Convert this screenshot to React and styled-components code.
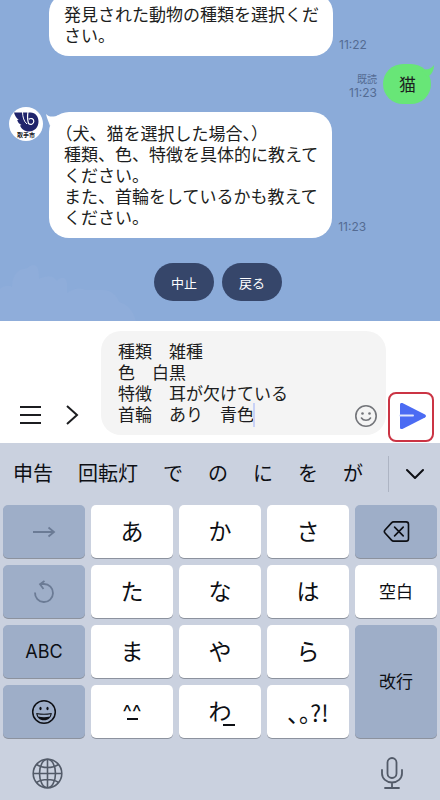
import React, { useState } from "react";
import styled, { createGlobalStyle } from "styled-components";

const GlobalStyle = createGlobalStyle`
  * {
    box-sizing: border-box;
  }
  body {
    margin: 0;
    font-family: Inter, "Noto Sans CJK JP", sans-serif;
    color: #1c1d20;
  }
  button {
    padding: 0;
    border: none;
    background: none;
    font-family: inherit;
    color: inherit;
    cursor: pointer;
  }
`;

const Screen = styled.div`
  display: flex;
  flex-direction: column;
  height: 100vh;
  overflow: hidden;
`;

/* ---------- chat ---------- */

const Chat = styled.main`
  position: relative;
  flex: 1;
  min-height: 0;
  display: flex;
  flex-direction: column;
  justify-content: flex-end;
  padding: 0 9px 20px;
  overflow: hidden;
  background: #8babd9;
`;

const Clouds = styled.svg`
  position: absolute;
  left: 0;
  bottom: 0;
`;

const Row = styled.div`
  display: flex;
  align-items: flex-end;
  justify-content: ${(props) => (props.$mine ? "flex-end" : "flex-start")};
  gap: 6px;
  margin-bottom: ${(props) => props.$space || 0}px;
`;

const AvatarSlot = styled.div`
  flex: none;
  align-self: flex-start;
  width: 34px;
`;

const Avatar = styled.div`
  display: flex;
  flex-direction: column;
  align-items: center;
  width: 34px;
  height: 34px;
  padding-top: 5px;
  border-radius: 50%;
  background: #fff;
  color: #15161c;
  font-size: 6px;
  font-weight: 700;
  line-height: 6px;
`;

const Bubble = styled.div`
  position: relative;
  padding: ${(props) => (props.$mine ? "9px 15px 10px 16px" : "10px 14px 11px 15px")};
  margin-top: ${(props) => (props.$tail ? 5 : 0)}px;
  border-radius: 20px;
  background: ${(props) => (props.$mine ? "#68e677" : "#fff")};
  font-family: "Noto Sans CJK JP", sans-serif;
  font-size: 17px;
  line-height: 21px;
  white-space: pre-line;
  text-spacing-trim: trim-start;
`;

const Tail = styled.svg`
  position: absolute;
  top: 1px;
  ${(props) => (props.$mine ? "right: -3px;" : "left: -3px;")}
`;

const Meta = styled.div`
  padding-bottom: 4px;
  font-size: 12px;
  line-height: 14px;
  text-align: right;
  color: #546b93;
`;

const Read = styled.div`
  font-size: 10px;
  line-height: 13px;
`;

const QuickReplies = styled.div`
  display: flex;
  justify-content: center;
  gap: 8px;
  padding-right: 4px;
`;

const QuickReply = styled.button`
  width: 60px;
  height: 38px;
  border-radius: 19px;
  background: #36466a;
  color: #fff;
  font-size: 13px;
`;

/* ---------- composer ---------- */

const Composer = styled.form`
  display: flex;
  align-items: flex-end;
  padding: 10px 6px 1px 18px;
  background: #fff;
`;

const IconButton = styled.button`
  display: flex;
  align-items: center;
  justify-content: center;
  width: 24px;
  height: 24px;
  margin: 0 ${(props) => props.$gap || 0}px ${(props) => props.$bottom || 0}px 0;
`;

const InputBox = styled.div`
  position: relative;
  flex: 1;
  display: flex;
  align-items: flex-end;
  margin: 0 2px 7px 0;
  padding: 9px 8px 7px 17px;
  border-radius: 20px;
  background: #f4f4f4;
`;

const MessageInput = styled.textarea`
  flex: 1;
  min-width: 0;
  display: block;
  margin-bottom: 4px;
  padding: 0;
  border: none;
  outline: none;
  resize: none;
  overflow: hidden;
  background: transparent;
  color: #1c1d20;
  font-family: "Noto Sans CJK JP", sans-serif;
  font-size: 17px;
  line-height: 21px;
`;

const Caret = styled.span`
  position: absolute;
  left: 152px;
  bottom: 8px;
  width: 2px;
  height: 24px;
  background: #c9d2f7;
`;

const SendButton = styled.button`
  display: flex;
  align-items: center;
  justify-content: center;
  width: 46px;
  height: 50px;
  padding-left: 4px;
  padding-bottom: 2px;
  border: 2px solid #cb3444;
  border-radius: 8px;
`;

/* ---------- keyboard ---------- */

const Keyboard = styled.section`
  background: #cad1df;
  color: #0d0f14;
`;

const Candidates = styled.div`
  display: flex;
  align-items: center;
  gap: 25px;
  height: 62px;
  padding: 0 12px 0 13px;
`;

const Candidate = styled.button`
  font-size: 20px;
  line-height: 24px;
  white-space: nowrap;
`;

const More = styled.button`
  display: flex;
  align-items: center;
  justify-content: flex-end;
  width: 40px;
  height: 36px;
  margin-left: auto;
  padding-right: 4px;
  border-left: 1px solid #adb4c3;
`;

const Keys = styled.div`
  display: grid;
  grid-template-columns: repeat(5, 1fr);
  grid-auto-rows: 53px;
  gap: 7px 6px;
  padding: 0 3px;
`;

const Key = styled.button`
  display: flex;
  align-items: center;
  justify-content: center;
  grid-row: span ${(props) => props.$rows || 1};
  border-radius: 5px;
  background: ${(props) => (props.$dark ? "#9eaec8" : "#fff")};
  box-shadow: 0 1px 0 #8c929e;
  color: #0d0f14;
  font-size: ${(props) => props.$size || 23}px;
  line-height: 24px;
`;

const Punctuation = styled.span`
  font-family: "Noto Sans CJK JP", sans-serif;
  font-feature-settings: "palt";
`;

/* label with a short bar under it */
const Underlined = styled.span`
  position: relative;

  &::after {
    content: "";
    position: absolute;
    left: ${(props) => props.$left}px;
    bottom: ${(props) => props.$bottom}px;
    width: ${(props) => props.$bar}px;
    height: 2px;
    background: #0d0f14;
  }
`;

const BottomBar = styled.div`
  display: flex;
  align-items: center;
  justify-content: space-between;
  height: 62px;
  padding: 8px 36px 0 32px;
`;

const BarButton = styled.button`
  display: flex;
`;

function CityLogo() {
  return (
    <svg width="26" height="20" viewBox="0 0 26 20" aria-hidden="true">
      <path
        d="M1 .5h16.500c5 0 8 4 8 9 0 5.700-4 10-9.500 10-4.500 0-7.500-2.500-9-6l1.500-.5C6 12 4.800 10 4.200 8l1.500-.2C3.500 6.500 1.800 3.500 1 .5z"
        fill="#20246b"
      />
      <path d="M9.500 0c.2 5 1.300 9.500 4.500 12" fill="none" stroke="#fff" strokeWidth="1" />
      <path d="M15 0c-.7 4-.6 8 .5 11.500 2 1.800 5.300.8 5.300-2.200 0-2.700-3-3.600-5-2" fill="none" stroke="#fff" strokeWidth="1.200" />
    </svg>
  );
}

function BubbleTail({ mine }) {
  return (
    <Tail $mine={mine} width="18" height="16" viewBox="0 0 18 16" aria-hidden="true">
      {mine ? (
        <path d="M18 0c-.2 6-2.500 10-7 12L5 4c5 1.500 10 .3 13-4z" fill="#68e677" />
      ) : (
        <path d="M0 1c2.500 3 7 3.500 13 1L4 13C3 9 1 6 0 1z" fill="#fff" />
      )}
    </Tail>
  );
}

function DeleteIcon() {
  return (
    <svg width="27" height="23" viewBox="0 0 28 24" fill="none" stroke="#0d0f14" strokeWidth="1.700" strokeLinejoin="round" strokeLinecap="round" aria-hidden="true">
      <path d="M11 2H24a2.500 2.500 0 0 1 2.500 2.500v15A2.500 2.500 0 0 1 24 22H11a3 3 0 0 1-2.200-1L2 13.500a2.200 2.200 0 0 1 0-3L8.800 3A3 3 0 0 1 11 2z" />
      <path d="M12 7.500l9 9M21 7.500l-9 9" />
    </svg>
  );
}

function GrinIcon() {
  return (
    <svg width="26" height="26" viewBox="0 0 26 26" fill="none" aria-hidden="true">
      <circle cx="13" cy="13" r="11.300" stroke="#0d0f14" strokeWidth="1.500" />
      <ellipse cx="9.500" cy="9.500" rx="1.100" ry="1.700" fill="#0d0f14" />
      <ellipse cx="16.500" cy="9.500" rx="1.100" ry="1.700" fill="#0d0f14" />
      <path d="M5.200 14c5 1 10.600 1 15.600 0-.3 4.500-3.400 7.300-7.800 7.300S5.500 18.500 5.200 14z" fill="#0d0f14" />
      <path d="M6.500 15.200c4.200.8 8.800.8 13 0l-.7 2.300c-3.600.9-8 .9-11.600 0z" fill="#9eaec8" />
    </svg>
  );
}

function GlobeIcon() {
  return (
    <svg width="31" height="31" viewBox="0 0 31 31" fill="none" stroke="#525a68" strokeWidth="1.600" aria-hidden="true">
      <circle cx="15.500" cy="15.500" r="14.300" />
      <ellipse cx="15.500" cy="15.500" rx="8" ry="14.300" />
      <path d="M1 15.500h29M15.500 1v29M4.500 6.500c6 4 16 4 22 0M4.500 24.500c6-4 16-4 22 0" />
    </svg>
  );
}

function MicIcon() {
  return (
    <svg width="24" height="34" viewBox="0 0 24 34" fill="none" stroke="#525a68" strokeWidth="1.800" strokeLinecap="round" aria-hidden="true">
      <rect x="7.500" y="2" width="9" height="20" rx="4.500" />
      <path d="M2 14v3.500a10 9 0 0 0 20 0V14M12 26.500V32M5 32h14" />
    </svg>
  );
}

const candidates = ["申告", "回転灯", "で", "の", "に", "を", "が"];

const App = () => {
  const [message, setMessage] = useState(
    "種類　雑種\n色　白黒\n特徴　耳が欠けている\n首輪　あり　青色"
  );

  const type = (text) => setMessage(message + text);

  return (
    <Screen>
      <GlobalStyle />
      <Chat>
        <Clouds width="150" height="58" viewBox="0 0 150 58" aria-hidden="true">
          <path
            d="M0 26c4-4 9-4 12-2 0-10 5-18 12-18 4 0 5-4 9-4 6 0 6 8 6 14 8-4 14-4 18 2 4-5 9-4 10 2v10c6-4 12-6 18-3h18c8 0 14 5 16 12 8 2 14 8 17 19H0z"
            fill="#8fadda"
          />
        </Clouds>

        <Row $space={8}>
          <AvatarSlot />
          <Bubble>{"発見された動物の種類を選択くだ\nさい。"}</Bubble>
          <Meta>11:22</Meta>
        </Row>

        <Row $mine $space={3}>
          <Meta>
            <Read>既読</Read>
            11:23
          </Meta>
          <Bubble $mine>
            猫
            <BubbleTail mine />
          </Bubble>
        </Row>

        <Row $space={25}>
          <AvatarSlot>
            <Avatar>
              <CityLogo />
              取手市
            </Avatar>
          </AvatarSlot>
          <Bubble $tail>
            {"（犬、猫を選択した場合、）\n種類、色、特徴を具体的に教えて\nください。\nまた、首輪をしているかも教えて\nください。"}
            <BubbleTail />
          </Bubble>
          <Meta>11:23</Meta>
        </Row>

        <QuickReplies>
          <QuickReply type="button">中止</QuickReply>
          <QuickReply type="button">戻る</QuickReply>
        </QuickReplies>
      </Chat>

      <Composer onSubmit={(e) => e.preventDefault()}>
        <IconButton type="button" aria-label="メニュー" $gap={18} $bottom={15}>
          <svg width="24" height="20" viewBox="0 0 24 20" stroke="#1c1d20" strokeWidth="2">
            <path d="M2 2h21M2 10h21M2 18h21" />
          </svg>
        </IconButton>
        <IconButton type="button" aria-label="開く" $gap={17} $bottom={15}>
          <svg width="14" height="22" viewBox="0 0 14 22" fill="none" stroke="#1c1d20" strokeWidth="2">
            <path d="M2 2l10 9-10 9" />
          </svg>
        </IconButton>
        <InputBox>
          <MessageInput
            aria-label="メッセージ"
            rows={4}
            value={message}
            onChange={(e) => setMessage(e.target.value)}
          />
          <Caret />
          <IconButton type="button" aria-label="スタンプ">
            <svg width="24" height="24" viewBox="0 0 24 24" fill="none" stroke="#73757a" strokeWidth="1.600" strokeLinecap="round">
              <circle cx="12" cy="12" r="10.200" />
              <path d="M7.500 14c1.800 3 7.200 3 9 0" />
              <circle cx="8.500" cy="9.500" r="1.300" fill="#73757a" stroke="none" />
              <circle cx="15.500" cy="9.500" r="1.300" fill="#73757a" stroke="none" />
            </svg>
          </IconButton>
        </InputBox>
        <SendButton type="submit" aria-label="送信">
          <svg width="28" height="28" viewBox="0 0 28 28">
            <path d="M1 2.500C1 1 2.200.6 3.400 1.100L26 12.500c1.300.7 1.300 2.300 0 3L3.400 26.900C2.200 27.400 1 27 1 25.500z" fill="#4b6bf3" />
            <path d="M1 13.500h13" stroke="#dfe5fd" strokeWidth="2" strokeLinecap="round" />
          </svg>
        </SendButton>
      </Composer>

      <Keyboard>
        <Candidates>
          {candidates.map((word) => (
            <Candidate key={word} type="button" onClick={() => type(word)}>
              {word}
            </Candidate>
          ))}
          <More type="button" aria-label="候補を表示">
            <svg width="18" height="12" viewBox="0 0 18 12" fill="none" stroke="#0d0f14" strokeWidth="2" strokeLinecap="round" strokeLinejoin="round">
              <path d="M1 2l8 8 8-8" />
            </svg>
          </More>
        </Candidates>

        <Keys>
          <Key type="button" $dark aria-label="次へ">
            <svg width="24" height="12" viewBox="0 0 24 12" fill="none" stroke="#6b7b95" strokeWidth="1.800">
              <path d="M1 6h21M16.500 1.500L22 6l-5.500 4.500" />
            </svg>
          </Key>
          <Key type="button" onClick={() => type("あ")}>あ</Key>
          <Key type="button" onClick={() => type("か")}>か</Key>
          <Key type="button" onClick={() => type("さ")}>さ</Key>
          <Key type="button" $dark aria-label="削除" onClick={() => setMessage(message.slice(0, -1))}>
            <DeleteIcon />
          </Key>

          <Key type="button" $dark aria-label="戻す">
            <svg width="22" height="24" viewBox="0 0 22 24" fill="none" stroke="#6b7b95" strokeWidth="1.800">
              <path d="M2 12.500a9 9 0 1 0 9-8.500H7M11.500 1L7 4.200 10.500 9" />
            </svg>
          </Key>
          <Key type="button" onClick={() => type("た")}>た</Key>
          <Key type="button" onClick={() => type("な")}>な</Key>
          <Key type="button" onClick={() => type("は")}>は</Key>
          <Key type="button" $size={17} onClick={() => type("　")}>空白</Key>

          <Key type="button" $dark $size={18}>ABC</Key>
          <Key type="button" onClick={() => type("ま")}>ま</Key>
          <Key type="button" onClick={() => type("や")}>や</Key>
          <Key type="button" onClick={() => type("ら")}>ら</Key>
          <Key type="button" $dark $rows={2} $size={17} onClick={() => type("\n")}>改行</Key>

          <Key type="button" $dark aria-label="絵文字">
            <GrinIcon />
          </Key>
          <Key type="button" $size={20}>
            <Underlined $left={4} $bottom={4} $bar={11}>^^</Underlined>
          </Key>
          <Key type="button" onClick={() => type("わ")}>
            <Underlined $left={14} $bottom={-2} $bar={12}>わ</Underlined>
          </Key>
          <Key type="button">
            <Punctuation>、。?!</Punctuation>
          </Key>
        </Keys>

        <BottomBar>
          <BarButton type="button" aria-label="言語">
            <GlobeIcon />
          </BarButton>
          <BarButton type="button" aria-label="音声入力">
            <MicIcon />
          </BarButton>
        </BottomBar>
      </Keyboard>
    </Screen>
  );
};

export default App;
